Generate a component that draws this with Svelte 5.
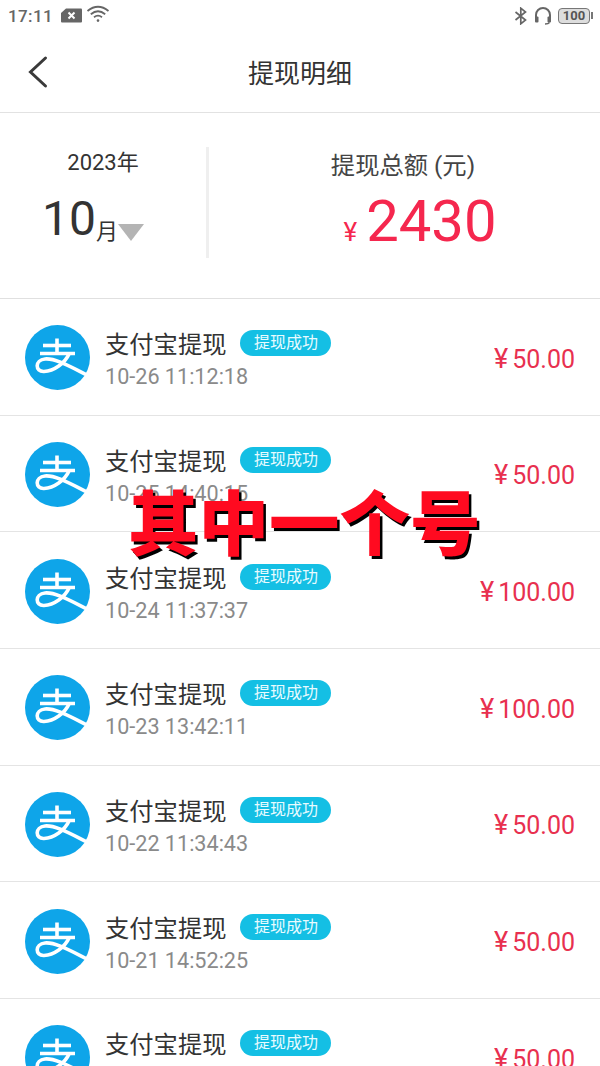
<script lang="ts">
  const rows = [
    { time: "10-26 11:12:18", amount: "50.00" },
    { time: "10-25 14:40:15", amount: "50.00" },
    { time: "10-24 11:37:37", amount: "100.00" },
    { time: "10-23 13:42:11", amount: "100.00" },
    { time: "10-22 11:34:43", amount: "50.00" },
    { time: "10-21 14:52:25", amount: "50.00" },
    { time: "10-20 11:20:36", amount: "50.00" },
  ];
</script>

<div class="page">
  <div class="statusbar">
    <div class="status-left">
      <span class="clock">17:11</span>
      <svg class="sim" width="21" height="15" viewBox="0 0 21 15">
        <path d="M5 0.5H20a1 1 0 0 1 1 1V13.5a1 1 0 0 1-1 1H1a1 1 0 0 1-1-1V5z" fill="#666" />
        <path d="M7.5 4.5l6 6M13.5 4.5l-6 6" stroke="#fff" stroke-width="2" fill="none" />
      </svg>
      <svg class="wifi" width="24" height="18" viewBox="0 0 24 18" fill="none" stroke="#666" stroke-width="1.8">
        <path d="M1.5 6Q12-2.5 22.5 6" />
        <path d="M4.8 9.2Q12 3.4 19.2 9.2" />
        <path d="M8 12.2Q12 9.2 16 12.2" />
        <circle cx="12" cy="15.6" r="1.3" fill="#666" stroke="none" />
      </svg>
    </div>
    <div class="status-right">
      <svg width="14" height="18" viewBox="0 0 14 18" fill="none" stroke="#666" stroke-width="1.7">
        <path d="M1.5 5L11.5 13L6.8 16.8V1.2L11.5 5L1.5 13" />
      </svg>
      <svg width="18" height="19" viewBox="0 0 18 19" fill="none" stroke="#666" stroke-width="2">
        <path d="M2 12V9a7 7 0 0 1 14 0v3" />
        <rect x="1" y="10.5" width="3.5" height="6" rx="1" fill="#666" stroke="none" />
        <rect x="13.5" y="10.5" width="3.5" height="6" rx="1" fill="#666" stroke="none" />
        <path d="M15.5 16.5q-1 1.5-4.5 1.5" stroke-width="1.4" />
      </svg>
      <div class="battery"><span>100</span></div>
    </div>
  </div>

  <header class="nav">
    <svg class="back" width="22" height="34" viewBox="0 0 22 34" fill="none" stroke="#3a3a3a" stroke-width="3" stroke-linecap="round">
      <path d="M18.5 3L3.5 17L18.5 31" />
    </svg>
    <h1>提现明细</h1>
  </header>

  <section class="summary">
    <div class="date">
      <div class="year">2023年</div>
      <div class="month">
        <span class="month-num">10</span><span class="month-unit">月</span><span class="caret"></span>
      </div>
    </div>
    <div class="total">
      <div class="total-label">提现总额 (元)</div>
      <div class="total-value"><span class="yen">¥</span><span class="sum">2430</span></div>
    </div>
  </section>

  <ul class="list">
    {#each rows as row}
      <li class="row">
        <svg class="logo" width="65" height="65" viewBox="0 0 65 65">
          <circle cx="32.5" cy="32.5" r="32.5" fill="#0ea5e9" />
          <g fill="none" stroke="#fff" stroke-width="3.6">
            <path d="M18 20.5H46" />
            <path d="M15 28.5H50" />
            <path d="M32 13.5V28" />
            <path d="M44 29C40 38 29 46 19 46.5C10 47 9.5 35 20 34C30 33 44 41 62 50" />
          </g>
        </svg>
        <div class="info">
          <div class="title-line">
            <span class="title">支付宝提现</span>
            <span class="badge">提现成功</span>
          </div>
          <div class="time">{row.time}</div>
        </div>
        <div class="amount"><span class="amount-yen">¥</span>{row.amount}</div>
      </li>
    {/each}
  </ul>

  <div class="stamp">其中一个号</div>
</div>

<style>
  :global(body) {
    margin: 0;
    background: #fff;
  }

  .page {
    position: relative;
    width: 600px;
    height: 1066px;
    overflow: hidden;
    background: #fff;
    font-family: Roboto, "Noto Sans CJK SC", sans-serif;
    color: #333;
  }

  .statusbar {
    height: 33px;
    display: flex;
    justify-content: space-between;
    align-items: center;
    padding: 0 10px 2px 8px;
    box-sizing: border-box;
    color: #666;
  }

  .status-left,
  .status-right {
    display: flex;
    align-items: center;
  }

  .clock {
    font-size: 17px;
    font-weight: 500;
    letter-spacing: 0.4px;
  }

  .sim {
    margin-left: 8px;
  }

  .wifi {
    margin-left: 4px;
    margin-top: -4px;
  }

  .status-right {
    gap: 6px;
  }

  .battery {
    position: relative;
    width: 32px;
    height: 16px;
    box-sizing: border-box;
    border: 1.5px solid #777;
    border-radius: 4px;
    background: #ddd;
    display: flex;
    align-items: center;
    justify-content: center;
  }

  .battery::after {
    content: "";
    position: absolute;
    right: -4px;
    top: 3px;
    width: 2px;
    height: 7px;
    background: #777;
  }

  .battery span {
    font-size: 13px;
    font-weight: 700;
    color: #555;
  }

  .nav {
    height: 80px;
    box-sizing: border-box;
    padding-bottom: 2px;
    border-bottom: 1px solid #e2e2e2;
    display: flex;
    align-items: center;
    justify-content: center;
    position: relative;
  }

  .back {
    position: absolute;
    left: 27px;
    top: 22px;
  }

  h1 {
    margin: 0;
    font-size: 26px;
    font-weight: 400;
    color: #333;
  }

  .summary {
    height: 186px;
    box-sizing: border-box;
    border-bottom: 1px solid #e0e0e0;
    display: flex;
    align-items: flex-start;
    padding-top: 34px;
  }

  .date {
    width: 209px;
    height: 111px;
    box-sizing: border-box;
    border-right: 3px solid #efefef;
    display: flex;
    flex-direction: column;
    align-items: center;
  }

  .year {
    font-size: 22px;
    line-height: 30px;
    margin-top: 1px;
    color: #333;
  }

  .month {
    display: flex;
    align-items: flex-end;
    height: 60px;
    margin-top: 11px;
    margin-right: 20px;
  }

  .month-num {
    font-size: 48px;
    line-height: 60px;
    color: #333;
  }

  .month-unit {
    font-size: 22px;
    line-height: 30px;
    margin-bottom: 2px;
  }

  .caret {
    width: 0;
    height: 0;
    margin-bottom: 8px;
    border-left: 13px solid transparent;
    border-right: 13px solid transparent;
    border-top: 17px solid #b4b4b4;
  }

  .total {
    flex: 1;
    height: 111px;
    display: flex;
    flex-direction: column;
    align-items: center;
    margin-right: 3px;
  }

  .total-label {
    font-size: 24.3px;
    line-height: 34px;
    color: #444;
    margin-top: 2px;
  }

  .total-value {
    display: flex;
    align-items: baseline;
    color: #f5274e;
    margin-top: 5px;
    margin-left: 34px;
  }

  .yen {
    font-size: 26px;
    margin-right: 9px;
  }

  .sum {
    font-size: 58px;
    line-height: 66px;
  }

  .list {
    list-style: none;
    margin: 0;
    padding: 0;
  }

  .row {
    height: 116.67px;
    box-sizing: border-box;
    border-bottom: 1px solid #e4e4e4;
    padding: 0 25px;
    display: flex;
    align-items: center;
  }

  .logo {
    flex: none;
    margin-top: 2px;
  }

  .info {
    flex: 1;
    margin-left: 15px;
    margin-top: 5px;
  }

  .title-line {
    display: flex;
    align-items: center;
    height: 33px;
  }

  .title {
    font-size: 24.3px;
    color: #333;
  }

  .badge {
    margin-left: 14px;
    margin-top: 1px;
    width: 91px;
    height: 26px;
    border-radius: 13px;
    background: #14bfe4;
    color: #e8fbff;
    font-size: 16px;
    line-height: 26px;
    text-align: center;
  }

  .time {
    font-size: 21.6px;
    line-height: 30px;
    color: #8a8a8a;
    margin-top: 3px;
  }

  .amount {
    font-size: 25px;
    color: #e8304f;
    margin-top: 4px;
  }

  .amount-yen {
    font-size: 27px;
    margin-right: 4px;
  }

  .stamp {
    position: absolute;
    left: 128px;
    top: 469px;
    font-family: "Noto Sans CJK SC", sans-serif;
    font-size: 70.5px;
    line-height: 100px;
    font-weight: 900;
    color: #ff0a20;
    text-shadow: 2.5px 2.5px 0 #000;
    white-space: nowrap;
  }
</style>
